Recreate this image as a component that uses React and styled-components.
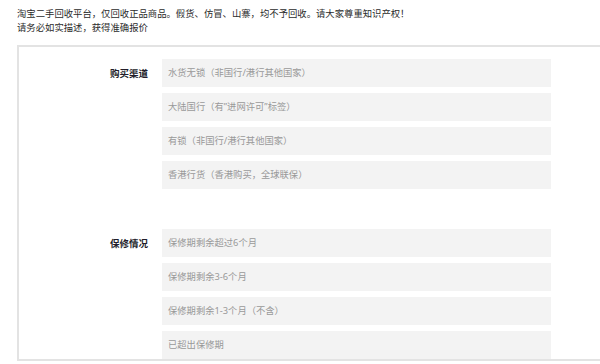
import React from "react";
import styled, { createGlobalStyle } from "styled-components";

const GlobalStyle = createGlobalStyle`
  html, body {
    margin: 0;
    padding: 0;
    background: #ffffff;
    overflow: hidden;
  }
  body {
    font-family: "Noto Sans CJK SC", "Noto Sans", sans-serif;
  }
`;

const Page = styled.div`
  width: 600px;
  height: 364px;
  overflow: hidden;
  padding: 5.5px 0 0 17px;
  box-sizing: border-box;
`;

const Notice = styled.div`
  font-size: 9.35px;
  line-height: 14.5px;
  color: #2b2b2b;
  margin-bottom: 10px;
`;

const Panel = styled.div`
  width: 640px;
  border: 2px solid #e3e3e3;
  padding-top: 12px;
  box-sizing: border-box;
  display: flex;
  flex-direction: column;
  gap: 40px;
`;

const Group = styled.div`
  display: grid;
  grid-template-columns: 129px 389px;
  column-gap: 14px;
  align-items: start;
`;

const Label = styled.div`
  text-align: right;
  font-size: 9.5px;
  font-weight: bold;
  line-height: 28px;
  color: #221d2a;
`;

const Options = styled.div`
  display: flex;
  flex-direction: column;
  gap: 6px;
`;

const Option = styled.div`
  height: 28px;
  line-height: 28px;
  background: #f3f3f3;
  padding-left: 6px;
  font-family: "Noto Sans", "Noto Sans CJK SC", sans-serif;
  font-size: 9.3px;
  color: #999999;
`;

const groups = [
  {
    label: "购买渠道",
    options: [
      "水货无锁（非国行/港行其他国家）",
      "大陆国行（有”进网许可”标签）",
      "有锁（非国行/港行其他国家）",
      "香港行货（香港购买，全球联保）",
    ],
  },
  {
    label: "保修情况",
    options: [
      "保修期剩余超过6个月",
      "保修期剩余3-6个月",
      "保修期剩余1-3个月（不含）",
      "已超出保修期",
    ],
  },
];

export default function App() {
  return (
    <>
      <GlobalStyle />
      <Page>
        <Notice>
          淘宝二手回收平台，仅回收正品商品。假货、仿冒、山寨，均不予回收。请大家尊重知识产权！
          <br />
          请务必如实描述，获得准确报价
        </Notice>
        <Panel>
          {groups.map((g) => (
            <Group key={g.label}>
              <Label>{g.label}</Label>
              <Options>
                {g.options.map((o) => (
                  <Option key={o}>{o}</Option>
                ))}
              </Options>
            </Group>
          ))}
        </Panel>
      </Page>
    </>
  );
}
